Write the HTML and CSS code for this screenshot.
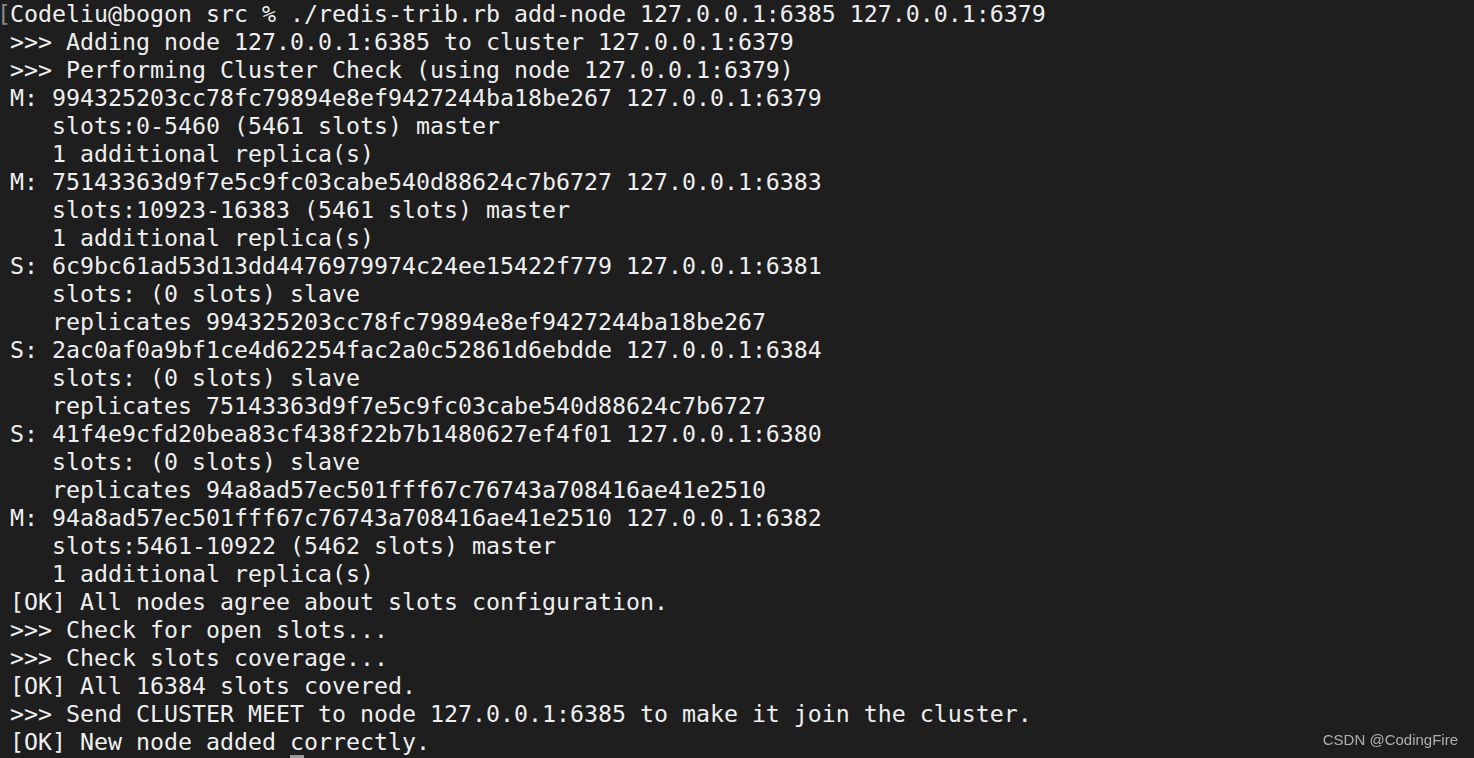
FILE: index.html
```html
<!DOCTYPE html>
<html>
<head>
<meta charset="utf-8">
<link rel="stylesheet" href="styles.css">
</head>
<body>
<div class="terminal">
<div class="line"><span class="mark">[</span>Codeliu@bogon src % ./redis-trib.rb add-node 127.0.0.1:6385 127.0.0.1:6379</div>
<div class="line">&gt;&gt;&gt; Adding node 127.0.0.1:6385 to cluster 127.0.0.1:6379</div>
<div class="line">&gt;&gt;&gt; Performing Cluster Check (using node 127.0.0.1:6379)</div>
<div class="line">M: 994325203cc78fc79894e8ef9427244ba18be267 127.0.0.1:6379</div>
<div class="line">   slots:0-5460 (5461 slots) master</div>
<div class="line">   1 additional replica(s)</div>
<div class="line">M: 75143363d9f7e5c9fc03cabe540d88624c7b6727 127.0.0.1:6383</div>
<div class="line">   slots:10923-16383 (5461 slots) master</div>
<div class="line">   1 additional replica(s)</div>
<div class="line">S: 6c9bc61ad53d13dd4476979974c24ee15422f779 127.0.0.1:6381</div>
<div class="line">   slots: (0 slots) slave</div>
<div class="line">   replicates 994325203cc78fc79894e8ef9427244ba18be267</div>
<div class="line">S: 2ac0af0a9bf1ce4d62254fac2a0c52861d6ebdde 127.0.0.1:6384</div>
<div class="line">   slots: (0 slots) slave</div>
<div class="line">   replicates 75143363d9f7e5c9fc03cabe540d88624c7b6727</div>
<div class="line">S: 41f4e9cfd20bea83cf438f22b7b1480627ef4f01 127.0.0.1:6380</div>
<div class="line">   slots: (0 slots) slave</div>
<div class="line">   replicates 94a8ad57ec501fff67c76743a708416ae41e2510</div>
<div class="line">M: 94a8ad57ec501fff67c76743a708416ae41e2510 127.0.0.1:6382</div>
<div class="line">   slots:5461-10922 (5462 slots) master</div>
<div class="line">   1 additional replica(s)</div>
<div class="line">[OK] All nodes agree about slots configuration.</div>
<div class="line">&gt;&gt;&gt; Check for open slots...</div>
<div class="line">&gt;&gt;&gt; Check slots coverage...</div>
<div class="line">[OK] All 16384 slots covered.</div>
<div class="line">&gt;&gt;&gt; Send CLUSTER MEET to node 127.0.0.1:6385 to make it join the cluster.</div>
<div class="line">[OK] New node added <span class="cursor">c</span>orrectly.</div>
</div>
<div class="watermark">CSDN @CodingFire</div>
</body>
</html>
```
FILE: styles.css
```css
html, body {
  margin: 0;
  padding: 0;
  height: 100%;
  overflow: hidden;
  background: #1e1e1e;
}

.terminal {
  padding: 0 0 0 10px;
  font-family: "DejaVu Sans Mono", "Liberation Mono", monospace;
  font-size: 23.25px;
  line-height: 28px;
  color: #efefef;
}

.line {
  white-space: pre;
  height: 28px;
}

.mark {
  display: inline-block;
  vertical-align: top;
  width: 10px;
  margin-left: -10px;
  text-indent: -3px;
  color: #8a8a8a;
  overflow: hidden;
}

.cursor {
  position: relative;
}

.cursor::after {
  content: "";
  position: absolute;
  left: 0;
  top: 27px;
  width: 14px;
  height: 4px;
  background: #9a9a9a;
}

.watermark {
  position: fixed;
  right: 16px;
  bottom: 10px;
  font-family: "Liberation Sans", Arial, sans-serif;
  font-size: 15px;
  color: #b0b0b0;
}
```
